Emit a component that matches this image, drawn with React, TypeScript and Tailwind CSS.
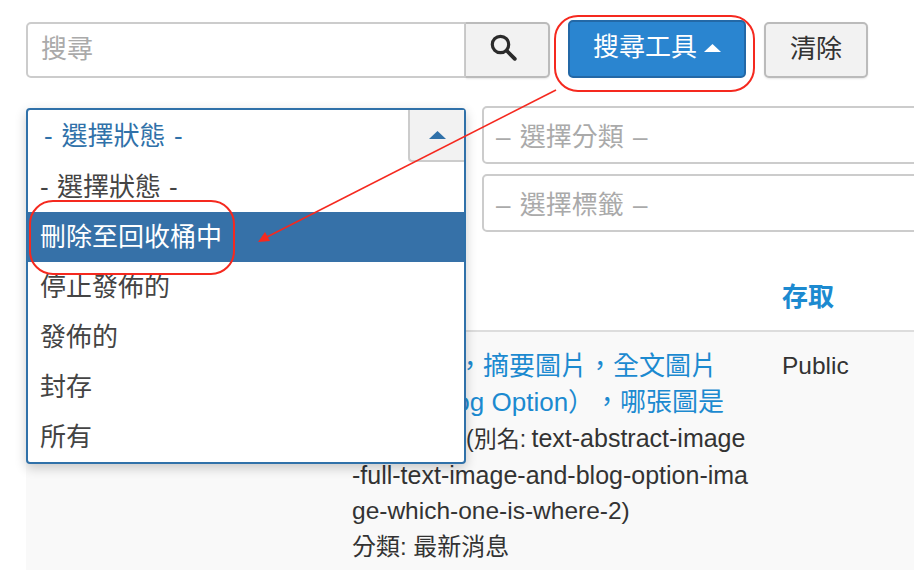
const sans = '"Liberation Sans", "Noto Sans CJK TC", sans-serif';

const STATES = ['- 選擇狀態 -', '刪除至回收桶中', '停止發佈的', '發佈的', '封存', '所有'];

function Caret({ color }: { color: string }) {
  return (
    <svg width="17" height="8" viewBox="0 0 17 8" className="block shrink-0">
      <path d="M8.5 0 L17 8 L0 8 Z" fill={color} />
    </svg>
  );
}

function SearchIcon() {
  return (
    <svg width="27" height="27" viewBox="0 0 27 27" fill="none" stroke="#2b2b2b" className="block">
      <circle cx="10.5" cy="10.5" r="8.2" strokeWidth="3.2" />
      <path d="M17 17 L24.8 24.8" strokeWidth="3.8" strokeLinecap="round" />
    </svg>
  );
}

function StatusDropdown() {
  return (
    <div className="absolute left-0 top-[2px] z-10 w-[440px] rounded-[4px] border-2 border-[#3071a9] bg-white shadow-[0_4px_12px_rgba(0,0,0,0.2)]">
      <div className="relative h-[52px] pl-[16px] text-[26px] leading-[52px] text-[#3071a9] [word-spacing:1.5px]">
        - 選擇狀態 -
        <div className="absolute right-0 top-0 flex h-[52px] w-[56px] items-center justify-center rounded-bl-[4px] border-b-2 border-l-2 border-[#cccccc] bg-[#f2f2f2]">
          <Caret color="#3071a9" />
        </div>
      </div>
      {STATES.map((s, i) => (
        <div
          key={s}
          className={`h-[50px] pl-[12px] text-[26px] leading-[50px] [word-spacing:1px] ${i === 1 ? 'bg-[#3671a8] text-white' : 'text-[#444444]'}`}
        >
          {s}
        </div>
      ))}
    </div>
  );
}

export default function App() {
  return (
    <div
      className="relative h-[570px] w-[914px] overflow-hidden bg-white pl-[26px] pt-[20px] [text-spacing-trim:space-all]"
      style={{ fontFamily: sans }}
    >
      {/* 搜尋列 */}
      <div className="flex items-end">
        <div className="flex h-[56px] w-[524px]">
          <div className="h-full w-[440px] rounded-l-[5px] border-2 border-[#cccccc] pl-[13px] text-[26px] leading-[50px] text-[#aaaaaa]">
            搜尋
          </div>
          <button className="flex h-full w-[84px] items-center justify-center rounded-r-[5px] border-2 border-l-0 border-[#bbbbbb] bg-[#f2f2f2] pb-[6px] pr-[8px] shadow-[0_1px_2px_rgba(0,0,0,0.1)]">
            <SearchIcon />
          </button>
        </div>
        <button className="ml-[18px] flex h-[58px] w-[178px] items-center justify-center gap-[7px] rounded-[5px] border-2 border-[#2368a6] bg-[#2a85d0] pb-[3px] text-[26px] text-white">
          搜尋工具
          <Caret color="#ffffff" />
        </button>
        <button className="ml-[18px] h-[56px] w-[104px] rounded-[5px] border-2 border-[#bbbbbb] bg-[#f2f2f2] pb-[2px] text-[26px] text-[#333333] shadow-[0_1px_2px_rgba(0,0,0,0.1)]">
          清除
        </button>
      </div>

      {/* 篩選 */}
      <div className="relative mt-[28px] flex h-[126px] justify-end">
        <StatusDropdown />
        <div className="-mr-[40px] flex w-[472px] flex-col gap-[10px]">
          {['選擇分類', '選擇標籤'].map((t) => (
            <div
              key={t}
              className="h-[58px] rounded-[5px] border-2 border-[#cccccc] pl-[12px] text-[26px] leading-[58px] text-[#aaaaaa] [word-spacing:2px]"
            >
              – {t} –
            </div>
          ))}
        </div>
      </div>

      {/* 表格 */}
      <div className="mt-[46px] flex h-[54px] items-start border-b-2 border-[#dddddd] pl-[756px] pt-[1px]">
        <span className="text-[26px] font-bold leading-[36px] text-[#1c8ad0]">存取</span>
      </div>
      <div className="flex h-[240px] bg-[#f9f9f9] pl-[326px] pt-[16px] text-[25px] leading-[36px] text-[#333333]">
        <div className="w-[430px] whitespace-nowrap">
          <div className="pl-[1px] text-[26px] text-[#1c8ad0]">文章內文，摘要圖片，全文圖片</div>
          <div className="pl-[21px] text-[26px] text-[#1c8ad0]">以及 Blog Option），哪張圖是</div>
          <div className="pl-[114px]">
            <span className="text-[23px] [word-spacing:-1px]">(別名: </span>text-abstract-image
          </div>
          <div>-full-text-image-and-blog-option-ima</div>
          <div className="text-[24.5px]">ge-which-one-is-where-2)</div>
          <div className="text-[24px]">分類: 最新消息</div>
        </div>
        <div className="text-[24.5px]">Public</div>
      </div>

      {/* 紅色標註 */}
      <div className="pointer-events-none absolute left-[554px] top-[15px] z-20 h-[77px] w-[201px] rounded-[24px] border-2 border-[#f5291f]" />
      <div className="pointer-events-none absolute left-[29px] top-[200px] z-20 h-[75px] w-[206px] rounded-[24px] border-2 border-[#f5291f]" />
      <svg className="pointer-events-none absolute left-0 top-0 z-20" width="914" height="570" viewBox="0 0 914 570">
        <path d="M556 90 L264 238.5" stroke="#f5291f" strokeWidth="1.6" fill="none" />
        <path d="M258 242 L265 232 L270 241 Z" fill="#f5291f" />
      </svg>
    </div>
  );
}
